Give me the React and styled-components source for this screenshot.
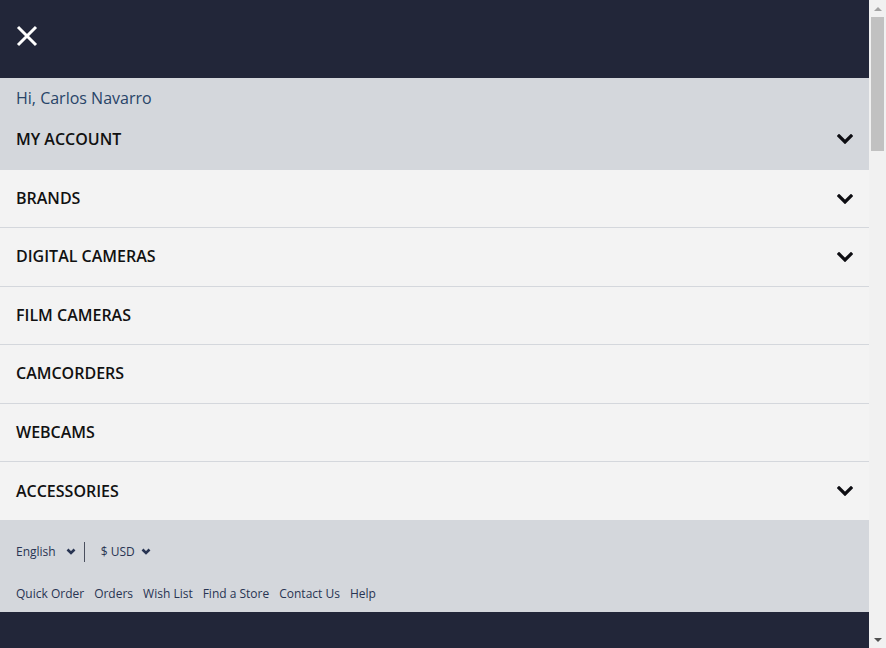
import React from "react";
import styled, { createGlobalStyle } from "styled-components";

const GlobalStyle = createGlobalStyle`
  html, body {
    margin: 0;
    padding: 0;
  }
  body {
    font-family: "Open Sans", "Liberation Sans", sans-serif;
    background: #222639;
  }
`;

const Page = styled.div`
  min-height: 2990px;
  width: calc(100% - 17px);
  background: #222639;
`;

// imitation of the browser's classic scrollbar seen in the capture
const ScrollTrack = styled.div`
  position: fixed;
  top: 0;
  right: 0;
  width: 17px;
  height: 100vh;
  background: #f1f1f1;
  display: flex;
  flex-direction: column;
  align-items: center;
`;

const ScrollArrow = styled.div`
  height: 17px;
  width: 17px;
  display: flex;
  align-items: center;
  justify-content: center;
  flex: none;
  &::before {
    content: "";
    border-left: 4px solid transparent;
    border-right: 4px solid transparent;
    ${(p) =>
      p.$down
        ? `border-top: 4px solid ${p.$color};`
        : `border-bottom: 4px solid ${p.$color};`}
  }
`;

const ScrollThumb = styled.div`
  width: 13px;
  height: 134px;
  background: #c1c1c1;
`;

const ScrollSpace = styled.div`
  flex: 1;
`;

const Header = styled.header`
  height: 78px;
  display: flex;
  align-items: flex-start;
  padding: 25px 16px 0;
  box-sizing: border-box;
`;

const CloseButton = styled.button`
  border: 0;
  background: none;
  padding: 0;
  width: 22px;
  height: 22px;
  display: flex;
  cursor: pointer;
`;

const Account = styled.div`
  background: #d4d7dc;
  padding: 10px 16px 0;
`;

const Greeting = styled.div`
  font-size: 16px;
  line-height: 20px;
  color: #284468;
`;

const Row = styled.div`
  height: ${(p) => p.$h || 58.6}px;
  box-sizing: border-box;
  display: flex;
  align-items: center;
  justify-content: space-between;
  padding: ${(p) => (p.$flush ? "0" : "0 16px")};
  background: ${(p) => p.$bg || "#f3f3f3"};
  border-top: ${(p) => (p.$line ? "1px solid #d4d7dc" : "0")};
`;

const Label = styled.span`
  font-size: 16px;
  font-weight: 600;
  color: #111;
  line-height: 20px;
  margin-top: -1px;
`;

const Menu = styled.nav`
  background: #f3f3f3;
`;

const Footer = styled.div`
  background: #d4d7dc;
  height: 92px;
  padding: 22px 16px 0;
  box-sizing: border-box;
`;

const Selectors = styled.div`
  display: flex;
  align-items: center;
  height: 20px;
`;

const Select = styled.span`
  display: flex;
  align-items: center;
  gap: ${(p) => p.$gap}px;
  font-size: 12px;
  color: #283452;
`;

const Divider = styled.span`
  width: 1px;
  height: 20px;
  background: #4a4f5e;
  margin: 0 16px 0 8px;
`;

const Links = styled.div`
  display: flex;
  gap: 10px;
  margin-top: 23px;
`;

const Link = styled.a`
  font-size: 12px;
  color: #283452;
  text-decoration: none;
`;

const Chevron = () => (
  <svg width="16" height="10" viewBox="0 0 16 10" fill="none">
    <path d="M2 2l6 6 6-6" stroke="#0d0d12" strokeWidth="3.2" strokeLinecap="square" />
  </svg>
);

const SmallChevron = () => (
  <svg width="10" height="7" viewBox="0 0 10 7" fill="none">
    <path d="M1.5 1.5l3.5 3.5 3.5-3.5" stroke="#283452" strokeWidth="2.6" />
  </svg>
);

const items = [
  { label: "BRANDS", more: true },
  { label: "DIGITAL CAMERAS", more: true },
  { label: "FILM CAMERAS" },
  { label: "CAMCORDERS" },
  { label: "WEBCAMS" },
  { label: "ACCESSORIES", more: true },
];

const links = ["Quick Order", "Orders", "Wish List", "Find a Store", "Contact Us", "Help"];

export default function App() {
  return (
    <>
      <GlobalStyle />
      <Page>
        <Header>
          <CloseButton aria-label="Close menu">
            <svg width="22" height="22" viewBox="0 0 22 22">
              <path d="M2 2l18 18M20 2L2 20" stroke="#fff" strokeWidth="3" />
            </svg>
          </CloseButton>
        </Header>
        <Account>
          <Greeting>Hi, Carlos Navarro</Greeting>
          <Row $bg="#d4d7dc" $h={62} $flush>
            <Label>MY ACCOUNT</Label>
            <Chevron />
          </Row>
        </Account>
        <Menu>
          {items.map((it, i) => (
            <Row key={it.label} $line={i > 0} $h={i === 0 ? 57 : undefined}>
              <Label>{it.label}</Label>
              {it.more && <Chevron />}
            </Row>
          ))}
        </Menu>
        <Footer>
          <Selectors>
            <Select $gap={10}>
              English <SmallChevron />
            </Select>
            <Divider />
            <Select $gap={6}>
              $ USD <SmallChevron />
            </Select>
          </Selectors>
          <Links>
            {links.map((l) => (
              <Link key={l} href="#">
                {l}
              </Link>
            ))}
          </Links>
        </Footer>
      </Page>
      <ScrollTrack>
        <ScrollArrow $color="#a3a3a3" />
        <ScrollThumb />
        <ScrollSpace />
        <ScrollArrow $down $color="#505050" />
      </ScrollTrack>
    </>
  );
}
